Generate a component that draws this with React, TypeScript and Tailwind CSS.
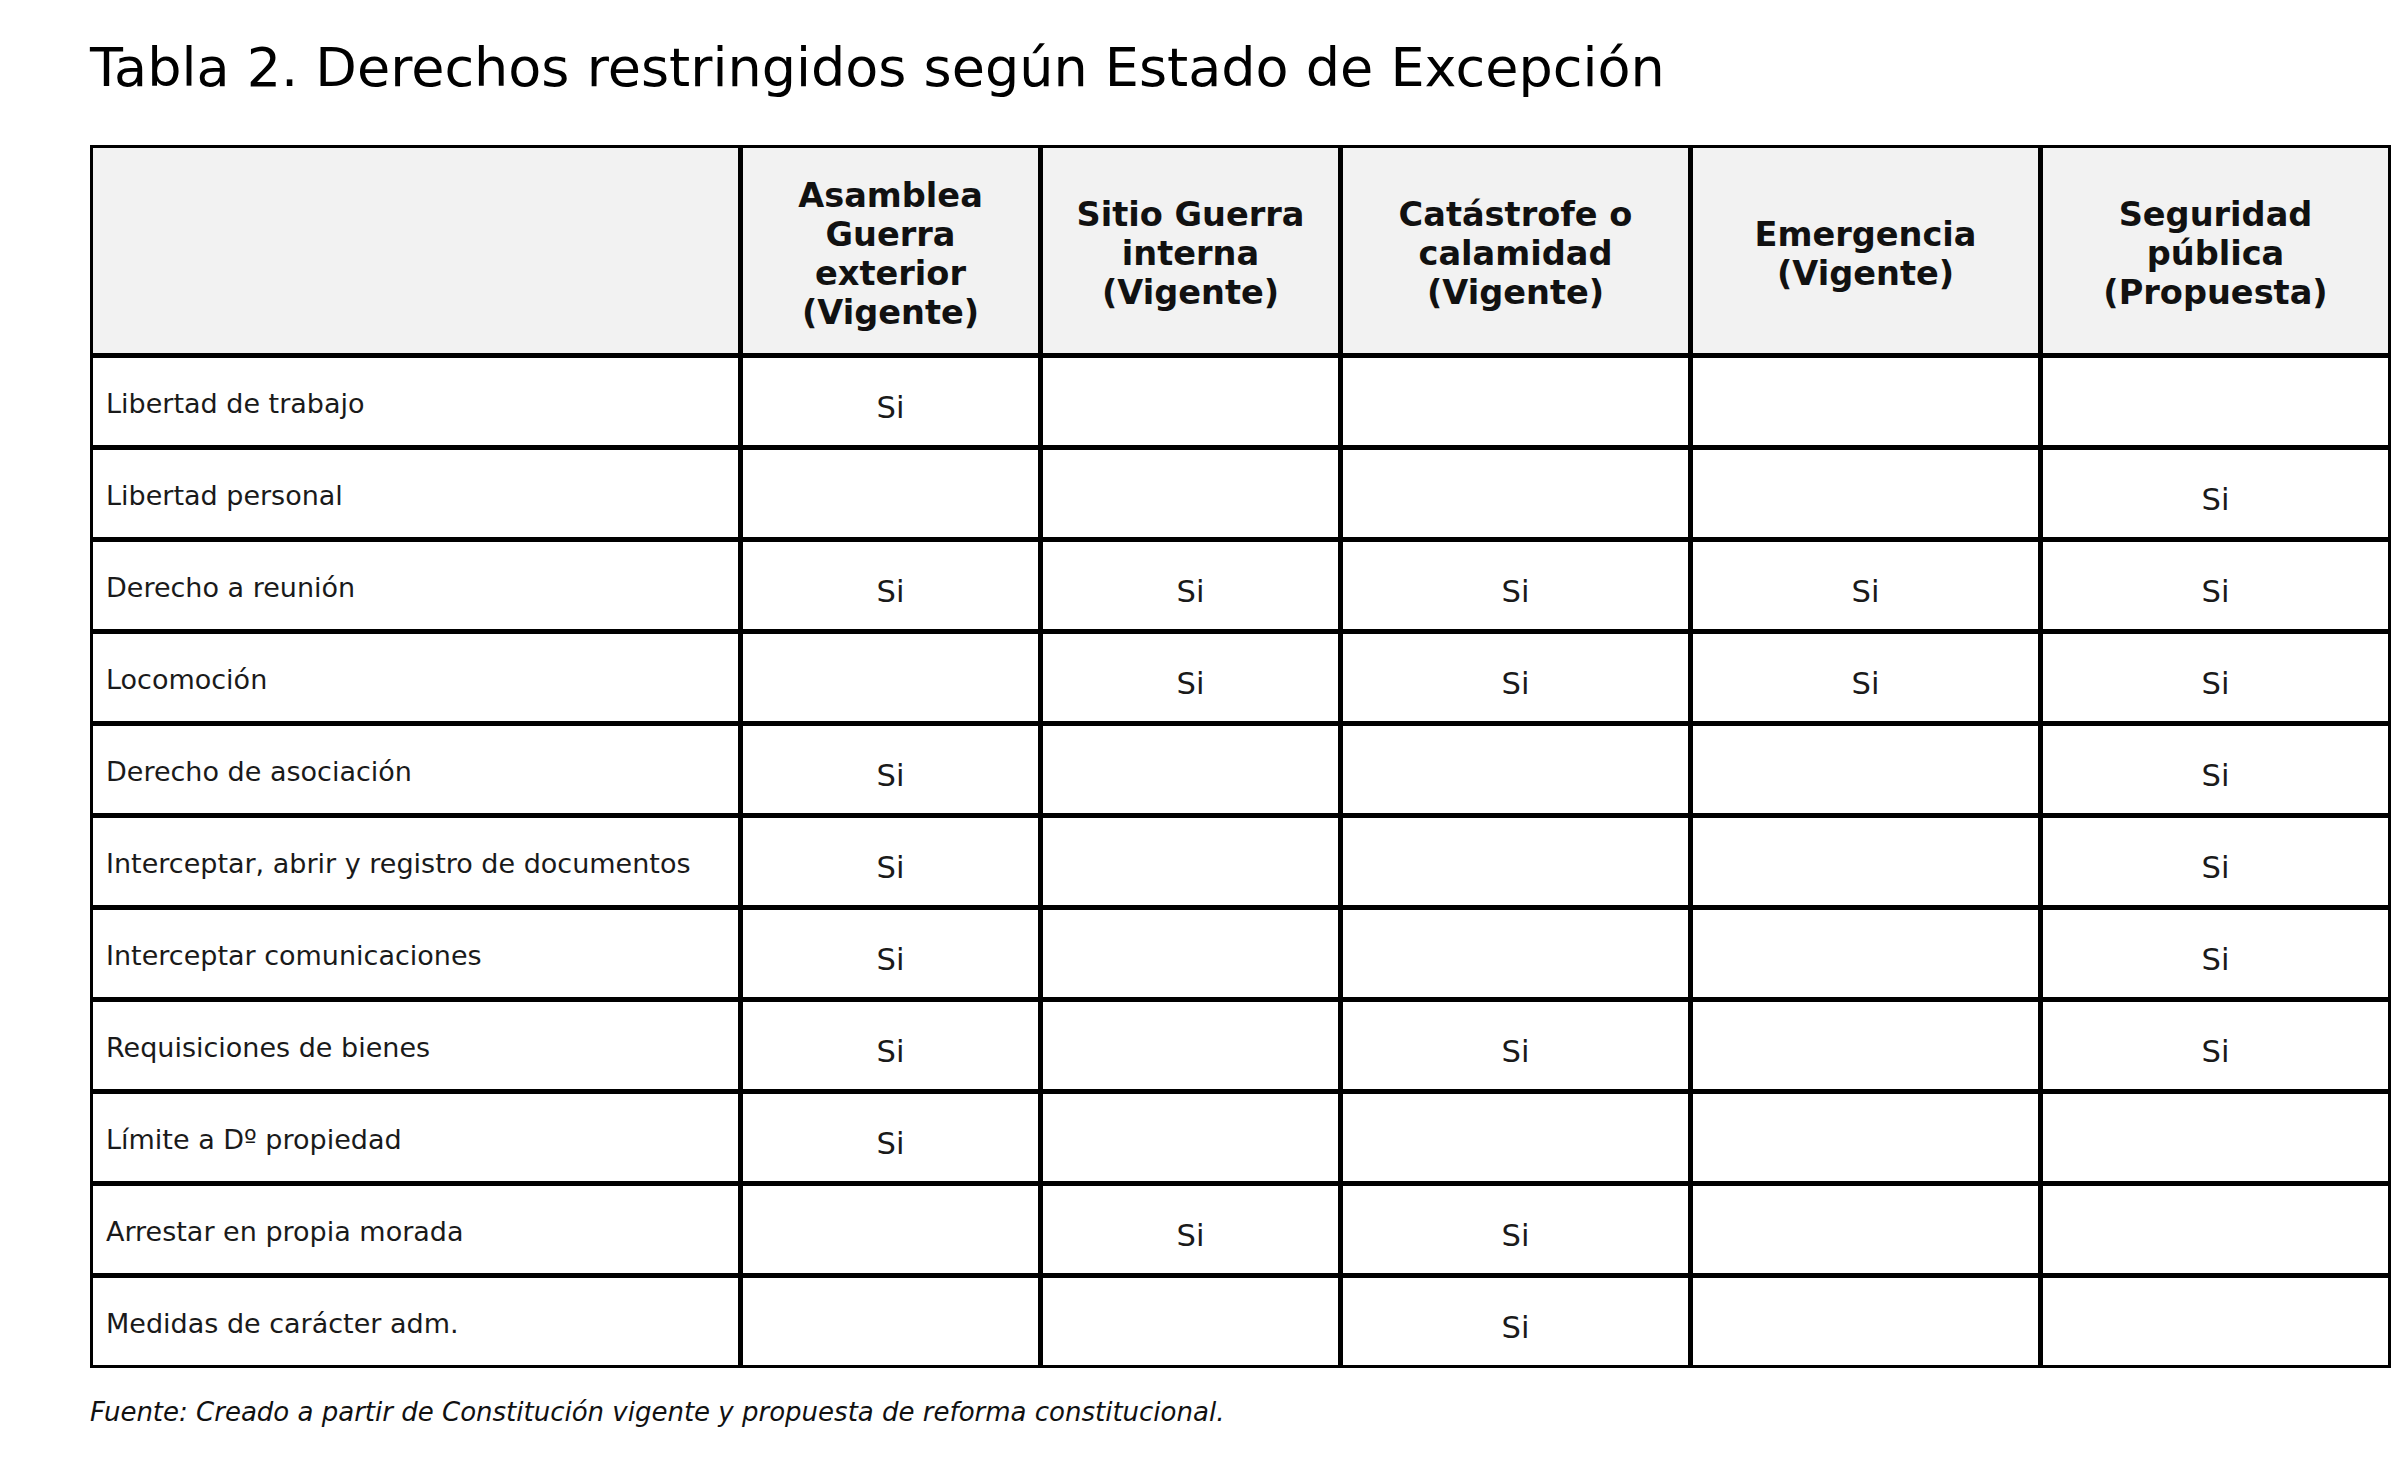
import React from 'react';

const headers = [
  '',
  'Asamblea Guerra exterior (Vigente)',
  'Sitio Guerra interna (Vigente)',
  'Catástrofe o calamidad (Vigente)',
  'Emergencia (Vigente)',
  'Seguridad pública (Propuesta)',
];

// 1 = "Si" marcado en la columna
const rows: [string, number[]][] = [
  ['Libertad de trabajo', [1, 0, 0, 0, 0]],
  ['Libertad personal', [0, 0, 0, 0, 1]],
  ['Derecho a reunión', [1, 1, 1, 1, 1]],
  ['Locomoción', [0, 1, 1, 1, 1]],
  ['Derecho de asociación', [1, 0, 0, 0, 1]],
  ['Interceptar, abrir y registro de documentos', [1, 0, 0, 0, 1]],
  ['Interceptar comunicaciones', [1, 0, 0, 0, 1]],
  ['Requisiciones de bienes', [1, 0, 1, 0, 1]],
  ['Límite a Dº propiedad', [1, 0, 0, 0, 0]],
  ['Arrestar en propia morada', [0, 1, 1, 0, 0]],
  ['Medidas de carácter adm.', [0, 0, 1, 0, 0]],
];

const font = { fontFamily: '"DejaVu Sans", Verdana, sans-serif' };

export default function App() {
  return (
    <div className="min-h-screen bg-white pt-[36px] pl-[90px]" style={font}>
      <h1 className="text-[54px] leading-[63px] font-normal text-black">
        Tabla 2. Derechos restringidos según Estado de Excepción
      </h1>

      <div className="mt-[46px] inline-grid grid-cols-[645px_295px_295px_345px_345px_345px] grid-rows-[205px] auto-rows-[87px] gap-[5px] bg-black p-[3px]">
        {headers.map((h, i) => (
          <div
            key={i}
            className="flex items-center justify-center bg-[#f2f2f2] px-2 pt-[6px] text-center text-[33.6px] leading-[39px] font-bold text-[#111]"
          >
            {h}
          </div>
        ))}

        {rows.map(([label, marks]) => (
          <React.Fragment key={label}>
            <div className="flex items-center bg-white pl-[13px] pt-[6px] text-[27px] text-[#1a1a1a]">
              {label}
            </div>
            {marks.map((m, j) => (
              <div
                key={j}
                className="flex items-center justify-center bg-white pt-[12px] text-[30.6px] text-[#1a1a1a]"
              >
                {m ? 'Si' : ''}
              </div>
            ))}
          </React.Fragment>
        ))}
      </div>

      <p className="mt-[25px] text-[26px] italic text-[#111]">
        Fuente: Creado a partir de Constitución vigente y propuesta de reforma constitucional.
      </p>
    </div>
  );
}
